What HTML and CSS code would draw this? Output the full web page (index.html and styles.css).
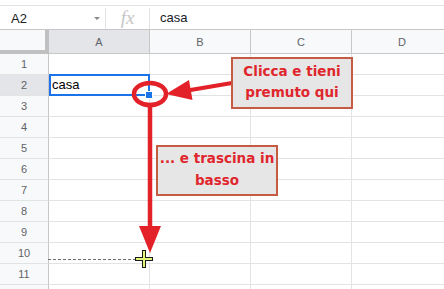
FILE: index.html
```html
<!DOCTYPE html>
<html lang="it">
  <head>
    <meta charset="UTF-8" />
    <meta name="viewport" content="width=device-width, initial-scale=1.0" />
    <title>Trascina il quadratino</title>
    <link rel="stylesheet" href="styles.css">
  </head>
  <body>
    <div class="sheet">
      <div class="formula-bar">
        <div class="name-box"><span>A2</span><span class="caret"></span></div>
        <div class="fx">fx</div>
        <div class="formula">casa</div>
      </div>

      <div class="grid">
        <div class="corner"></div>
        <div class="col-head selected">A</div>
        <div class="col-head">B</div>
        <div class="col-head">C</div>
        <div class="col-head">D</div>

        <div class="row-head">1</div><div class="cell"></div><div class="cell"></div><div class="cell"></div><div class="cell"></div>
        <div class="row-head selected">2</div><div class="cell active">casa</div><div class="cell"></div><div class="cell"></div><div class="cell"></div>
        <div class="row-head">3</div><div class="cell"></div><div class="cell"></div><div class="cell"></div><div class="cell"></div>
        <div class="row-head">4</div><div class="cell"></div><div class="cell"></div><div class="cell"></div><div class="cell"></div>
        <div class="row-head">5</div><div class="cell"></div><div class="cell"></div><div class="cell"></div><div class="cell"></div>
        <div class="row-head">6</div><div class="cell"></div><div class="cell"></div><div class="cell"></div><div class="cell"></div>
        <div class="row-head">7</div><div class="cell"></div><div class="cell"></div><div class="cell"></div><div class="cell"></div>
        <div class="row-head">8</div><div class="cell"></div><div class="cell"></div><div class="cell"></div><div class="cell"></div>
        <div class="row-head">9</div><div class="cell"></div><div class="cell"></div><div class="cell"></div><div class="cell"></div>
        <div class="row-head">10</div><div class="cell"></div><div class="cell"></div><div class="cell"></div><div class="cell"></div>
        <div class="row-head">11</div><div class="cell"></div><div class="cell"></div><div class="cell"></div><div class="cell"></div>
        <div class="row-head"></div><div class="cell"></div><div class="cell"></div><div class="cell"></div><div class="cell"></div>
      </div>

      <!-- annotation layer drawn over the sheet -->
      <svg class="marks" width="444" height="289" viewBox="0 0 444 289">
        <line x1="48" y1="259.5" x2="136" y2="259.5" class="drag-edge" />
        <ellipse cx="150" cy="94" rx="16" ry="11" class="red-ring" />
        <line x1="232" y1="83" x2="189" y2="90.2" class="red-line" />
        <polygon points="166,94 189,80 192.5,100" class="red-head" />
        <line x1="150" y1="106" x2="150" y2="230" class="red-line wide" />
        <polygon points="150,253 139,226 161,226" class="red-head" />
        <g class="cursor">
          <path d="M135 259H153M144 250V268" class="cursor-back" />
          <path d="M136 259H152M144 251V267" class="cursor-front" />
        </g>
      </svg>

      <div class="callout first">Clicca e tieni<br />premuto qui</div>
      <div class="callout second">... e trascina in<br />basso</div>
    </div>
  </body>
</html>
```

FILE: styles.css
```css
body {
  margin: 0;
  background: #fff;
  font-family: "Liberation Sans", Arial, sans-serif;
  overflow: hidden;
}
.sheet {
  position: relative;
  width: 444px;
  height: 289px;
  overflow: hidden;
  padding-top: 5px;
  box-sizing: border-box;
}
.formula-bar {
  display: flex;
  align-items: center;
  height: 23px;
  border-top: 1px solid #e3e3e3;
  font-size: 13px;
  color: #202124;
}
.name-box {
  display: flex;
  align-items: center;
  box-sizing: border-box;
  width: 106px;
  padding: 0 5px 0 11px;
  align-self: stretch;
  margin-top: 2px;
  border-right: 1px solid #e3e3e3;
}
.caret {
  margin-left: auto;
  width: 0;
  height: 0;
  border-left: 3px solid transparent;
  border-right: 3px solid transparent;
  border-top: 3px solid #8a8a8a;
}
.fx {
  box-sizing: border-box;
  width: 44px;
  align-self: stretch;
  margin-top: 2px;
  border-right: 1px solid #e3e3e3;
  text-align: center;
  font-family: "Liberation Serif", serif;
  font-style: italic;
  font-size: 19px;
  line-height: 19px;
  color: #c6c6c6;
}
.formula {
  padding-left: 10px;
}
.grid {
  display: grid;
  grid-template-columns: 49px 101px 101px 101px 101px;
  grid-template-rows: 24px;
  grid-auto-rows: 21px;
  border-top: 1px solid #c7c7c7;
}
.grid > div {
  box-sizing: border-box;
}
.corner {
  background: #f8f9fa;
  border-right: 4px solid #c0c0c0;
  border-bottom: 4px solid #c0c0c0;
}
.col-head {
  background: #f8f9fa;
  border-right: 1px solid #c7c7c7;
  border-bottom: 1px solid #c7c7c7;
  display: flex;
  align-items: center;
  justify-content: center;
  font-size: 11px;
  color: #5f6368;
}
.row-head {
  background: #f8f9fa;
  border-right: 1px solid #c7c7c7;
  border-bottom: 1px solid #e2e3e3;
  display: flex;
  align-items: center;
  justify-content: center;
  font-size: 11px;
  color: #5f6368;
}
.selected {
  background: #e3e5e8;
}
.cell {
  border-right: 1px solid #e2e3e3;
  border-bottom: 1px solid #e2e3e3;
  padding-left: 3px;
  font-size: 13px;
  line-height: 20px;
  color: #000;
}
.active {
  position: relative;
}
.active::before {
  content: "";
  position: absolute;
  top: -1px;
  left: 0;
  right: -1px;
  bottom: -1px;
  border: 2px solid #1a73e8;
}
.active::after {
  content: "";
  position: absolute;
  right: -3px;
  bottom: -3px;
  width: 6px;
  height: 6px;
  background: #1a73e8;
  outline: 1px solid #fff;
}
.marks {
  position: absolute;
  top: 0;
  left: 0;
}
.drag-edge {
  stroke: #6e6e6e;
  stroke-width: 1;
  stroke-dasharray: 3 2;
}
.red-ring {
  fill: none;
  stroke: #e32129;
  stroke-width: 4.5;
}
.red-line {
  stroke: #e32129;
  stroke-width: 4;
}
.red-line.wide {
  stroke-width: 4.5;
}
.red-head {
  fill: #e32129;
}
.cursor-back {
  stroke: #1b1b1b;
  stroke-width: 4;
  fill: none;
}
.cursor-front {
  stroke: #e2f57a;
  stroke-width: 2;
  fill: none;
}
.callout {
  position: absolute;
  box-sizing: border-box;
  width: 122px;
  background: #e7e6e6;
  border: 2px solid #c65b43;
  text-align: center;
  white-space: nowrap;
  font-family: "DejaVu Sans", Verdana, sans-serif;
  font-weight: bold;
  font-size: 13.5px;
  color: #e0262d;
}
.callout.first {
  left: 231px;
  top: 57px;
  padding: 2px 0 4px;
  line-height: 21px;
}
.callout.second {
  left: 156px;
  top: 145px;
  padding: 0 0 3px;
  line-height: 22px;
}
```
